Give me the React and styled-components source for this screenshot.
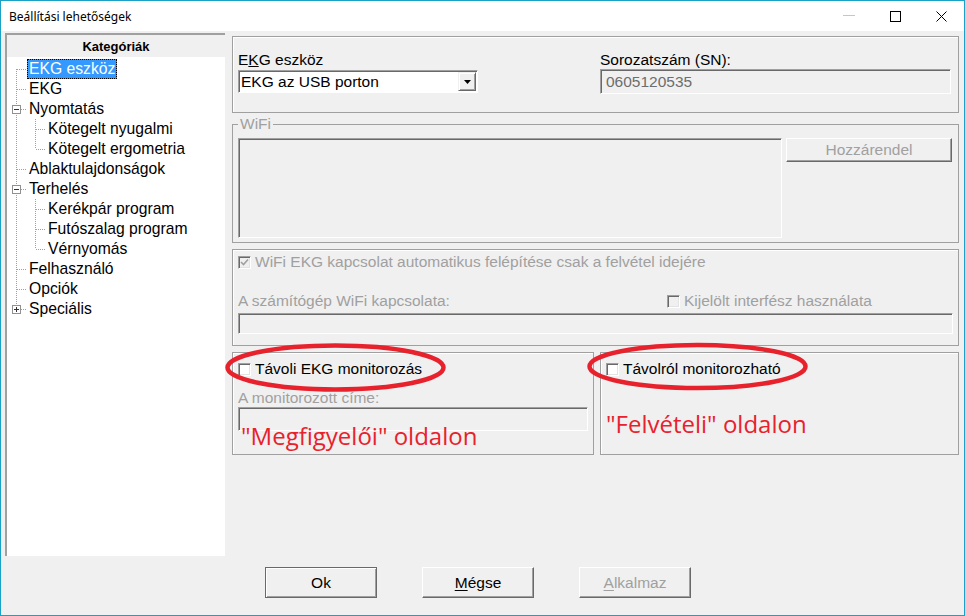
import React from 'react'
import styled, { createGlobalStyle } from 'styled-components'

const FACE = '#f0f0f0'
const EDGE = '#a0a0a0'
const SHADOW = '#696969'
const GRAYTEXT = '#a0a0a0'
const RED = '#e8222d'
const HIGHLIGHT = '#3399ff'

const GlobalStyle = createGlobalStyle`
  body {
    margin: 0;
    background: #fff;
  }
  * {
    box-sizing: border-box;
  }
`

const Window = styled.div`
  width: 965px;
  height: 616px;
  border: 1px solid #1ba1c5;
  display: flex;
  flex-direction: column;
  background: ${FACE};
  font-family: "Liberation Sans", Arial, sans-serif;
  font-size: 15.5px;
  color: #000;
  overflow: hidden;
`

const TitleBar = styled.div`
  flex: none;
  height: 30px;
  display: flex;
  align-items: center;
  background: #fff;
  padding-left: 8px;
  font-family: "Noto Sans", sans-serif;
  font-size: 12px;
`

const Title = styled.span`
  flex: 1;
`

const Caption = styled.span`
  width: 46px;
  height: 30px;
  display: flex;
  align-items: center;
  justify-content: center;
`

const Body = styled.div`
  flex: 1;
  display: flex;
  flex-direction: column;
  padding: 2px 5px 0 4px;
`

const Main = styled.div`
  display: flex;
  gap: 7px;
  height: 523px;
`

/* ---------- tree ---------- */

const TreePanel = styled.div`
  width: 220px;
  flex: none;
  background: #fff;
  border-top: 2px solid ${EDGE};
  border-left: 2px solid ${EDGE};
  display: flex;
  flex-direction: column;
`

const TreeHeader = styled.div`
  height: 22px;
  background: ${FACE};
  display: flex;
  align-items: center;
  justify-content: center;
  font-weight: bold;
  font-size: 13px;
`

const TreeList = styled.div`
  padding-top: 2px;
  font-size: 15.7px;
`

const TreeRow = styled.div`
  display: flex;
  height: 20px;
`

const dots = (dir) => `repeating-linear-gradient(${dir}, #a0a0a0 0 1px, transparent 1px 2px)`

const treeLines = ({ $w, $x, $up, $down, $branch }) => {
  const layers = []
  if ($up) layers.push([dots('to bottom'), `${$x}px 0`, '1px 10px'])
  if ($down) layers.push([dots('to bottom'), `${$x}px 10px`, '1px 10px'])
  if ($branch) layers.push([dots('to right'), `${$x + 1}px 10px`, `${$w - $x - 1}px 1px`])
  if (!layers.length) return ''
  return `
    background-image: ${layers.map((l) => l[0]).join(', ')};
    background-position: ${layers.map((l) => l[1]).join(', ')};
    background-size: ${layers.map((l) => l[2]).join(', ')};
    background-repeat: no-repeat;
  `
}

const Gutter = styled.span`
  flex: none;
  width: ${(p) => p.$w}px;
  height: 20px;
  display: flex;
  align-items: center;
  ${treeLines}
`

const Expander = styled.svg`
  margin-left: ${(p) => p.$x - 4}px;
  display: block;
`

const TreeLabel = styled.span`
  height: 20px;
  line-height: 20px;
  padding: 0 2px;
  white-space: nowrap;
  background: ${(p) => (p.$selected ? HIGHLIGHT : 'transparent')};
  color: ${(p) => (p.$selected ? '#fff' : '#000')};
  outline: ${(p) => (p.$selected ? '1px dotted #000' : 'none')};
  outline-offset: -1px;
`

const TREE = [
  { label: 'EKG eszköz', selected: true },
  { label: 'EKG' },
  { label: 'Nyomtatás', children: ['Kötegelt nyugalmi', 'Kötegelt ergometria'] },
  { label: 'Ablaktulajdonságok' },
  { label: 'Terhelés', children: ['Kerékpár program', 'Futószalag program', 'Vérnyomás'] },
  { label: 'Felhasználó' },
  { label: 'Opciók' },
  { label: 'Speciális', collapsed: true },
]

const ExpandBox = ({ plus }) => (
  <Expander $x={9} width="9" height="9" viewBox="0 0 9 9">
    <rect x="0.5" y="0.5" width="8" height="8" fill="#fff" stroke="#919191" />
    <line x1="2" y1="4.5" x2="7" y2="4.5" stroke="#333" />
    {plus && <line x1="4.5" y1="2" x2="4.5" y2="7" stroke="#333" />}
  </Expander>
)

const Tree = () => {
  const rows = []
  TREE.forEach((node, i) => {
    const first = i === 0
    const last = i === TREE.length - 1
    const hasBox = node.children || node.collapsed
    rows.push(
      <TreeRow key={node.label}>
        <Gutter $w={20} $x={9} $up={!first} $down={!last} $branch>
          {hasBox && <ExpandBox plus={node.collapsed} />}
        </Gutter>
        <TreeLabel $selected={node.selected}>{node.label}</TreeLabel>
      </TreeRow>
    )
    ;(node.children || []).forEach((child, j) => {
      rows.push(
        <TreeRow key={child}>
          <Gutter $w={20} $x={9} $up $down={!last} />
          <Gutter $w={19} $x={8} $up $down={j < node.children.length - 1} $branch />
          <TreeLabel>{child}</TreeLabel>
        </TreeRow>
      )
    })
  })
  return (
    <TreePanel>
      <TreeHeader>Kategóriák</TreeHeader>
      <TreeList>{rows}</TreeList>
    </TreePanel>
  )
}

/* ---------- controls ---------- */

const Column = styled.div`
  flex: 1;
  display: flex;
  flex-direction: column;
`

const Group = styled.div`
  position: relative;
  border: 1px solid ${EDGE};
  box-shadow: inset 1px 1px 0 #fff;
  margin-top: ${(p) => p.$mt || 0}px;
  height: ${(p) => p.$h}px;
  padding: 0 5px;
`

const Fieldset = styled.fieldset`
  margin: 2px 0 0;
  border: 1px solid ${EDGE};
  padding: 5px 5px 4px 5px;
  min-width: 0;
  display: flex;
  gap: 4px;
`

const Legend = styled.legend`
  padding: 0 2px;
  line-height: 18px;
  color: ${GRAYTEXT};
`

const DeviceGrid = styled.div`
  display: grid;
  grid-template-columns: 362px 1fr;
  padding: 14px 2px 0 0;
`

const Field = styled.div`
  display: flex;
  flex-direction: column;
`

const Label = styled.div`
  height: 18px;
  line-height: 18px;
  color: ${(p) => (p.$disabled ? GRAYTEXT : '#000')};
  white-space: nowrap;
`

const Combo = styled.div`
  width: 240px;
  height: 23px;
  margin-top: 1px;
  display: flex;
  align-items: center;
  background: #fff;
  border: 1px solid;
  border-color: ${EDGE} #fff #fff ${EDGE};
  box-shadow: inset 1px 1px 0 ${SHADOW};
  padding: 1px 1px 1px 2px;
`

const ComboText = styled.span`
  flex: 1;
  line-height: 19px;
`

const ComboArrow = styled.span`
  width: 18px;
  height: 19px;
  display: flex;
  align-items: center;
  justify-content: center;
  background: ${FACE};
  border: 1px solid;
  border-color: ${FACE} ${SHADOW} ${SHADOW} ${FACE};
  box-shadow: inset 1px 1px 0 #fff, inset -1px -1px 0 ${EDGE};
`

const Sunken = styled.div`
  flex: none;
  height: ${(p) => p.$h}px;
  width: ${(p) => (p.$w ? `${p.$w}px` : 'auto')};
  background: ${FACE};
  border: 1px solid;
  border-color: ${EDGE} #fff #fff ${EDGE};
  box-shadow: inset 1px 1px 0 ${SHADOW};
  padding: 0 5px;
  display: flex;
  align-items: center;
  color: #6d6d6d;
`

const Button = styled.button`
  width: ${(p) => p.$w}px;
  height: ${(p) => p.$h}px;
  flex: none;
  background: ${FACE};
  font: inherit;
  color: ${(p) => (p.disabled ? GRAYTEXT : '#000')};
  border: 1px solid;
  border-color: ${(p) => (p.$default ? `${SHADOW}` : `#fff ${SHADOW} ${SHADOW} #fff`)};
  box-shadow: ${(p) =>
    p.$default ? `inset 1px 1px 0 #fff, inset -1px -1px 0 ${EDGE}` : `inset -1px -1px 0 ${EDGE}`};
  padding: 0;
  u {
    text-decoration-thickness: 1px;
    text-underline-offset: 2px;
  }
`

const CheckRow = styled.label`
  display: flex;
  align-items: center;
  gap: 4px;
  height: 18px;
  white-space: nowrap;
  color: ${(p) => (p.$disabled ? GRAYTEXT : '#000')};
`

const Box = styled.span`
  width: 13px;
  height: 13px;
  flex: none;
  display: flex;
  align-items: center;
  justify-content: center;
  background: ${(p) => (p.$disabled ? FACE : '#fff')};
  border: 1px solid;
  border-color: ${EDGE} #fff #fff ${EDGE};
  box-shadow: inset 1px 1px 0 ${SHADOW}, inset -1px -1px 0 #e3e3e3;
`

const Check = ({ checked, disabled, children }) => (
  <CheckRow $disabled={disabled}>
    <Box $disabled={disabled}>
      {checked && (
        <svg width="9" height="9" viewBox="0 0 9 9">
          <path d="M1 4 L3.5 6.5 L8 1.5" fill="none" stroke={disabled ? GRAYTEXT : '#000'} strokeWidth="1.6" />
        </svg>
      )}
    </Box>
    {children}
  </CheckRow>
)

const SplitRow = styled.div`
  display: grid;
  grid-template-columns: 429px 1fr;
  margin-top: ${(p) => p.$mt || 0}px;
`

const Stack = styled.div`
  display: flex;
  flex-direction: column;
  padding-top: ${(p) => p.$pt || 0}px;
`

const Gap = styled.div`
  flex: none;
  height: ${(p) => p.$h}px;
`

const MonitorRow = styled.div`
  position: relative;
  display: grid;
  grid-template-columns: 362px 1fr;
  gap: 6px;
  margin-top: 6px;
`

const Marks = styled.svg`
  position: absolute;
  left: 0;
  top: 0;
  width: 100%;
  height: 100%;
  overflow: visible;
  pointer-events: none;
`

const Note = styled.div`
  position: absolute;
  left: ${(p) => p.$left}px;
  top: ${(p) => p.$top}px;
  font-family: "Open Sans", "Noto Sans", sans-serif;
  font-size: 24px;
  line-height: 24px;
  color: ${RED};
  white-space: nowrap;
`

const ButtonRow = styled.div`
  display: flex;
  gap: 45px;
  margin-top: 11px;
  padding-left: 260px;
`

export default function App() {
  return (
    <Window>
      <GlobalStyle />
      <TitleBar>
        <Title>Beállítási lehetőségek</Title>
        <Caption>
          <svg width="12" height="2" viewBox="0 0 12 2">
            <rect width="12" height="1" fill="#c6c6c6" />
          </svg>
        </Caption>
        <Caption>
          <svg width="11" height="11" viewBox="0 0 11 11">
            <rect x="0.5" y="0.5" width="10" height="10" fill="none" stroke="#000" />
          </svg>
        </Caption>
        <Caption>
          <svg width="11" height="11" viewBox="0 0 11 11">
            <path d="M0.5 0.5 L10.5 10.5 M10.5 0.5 L0.5 10.5" stroke="#000" strokeWidth="1" />
          </svg>
        </Caption>
      </TitleBar>
      <Body>
        <Main>
          <Tree />
          <Column>
            <Group $mt={3} $h={77}>
              <DeviceGrid>
                <Field>
                  <Label>
                    E<u>K</u>G eszköz
                  </Label>
                  <Combo>
                    <ComboText>EKG az USB porton</ComboText>
                    <ComboArrow>
                      <svg width="7" height="4" viewBox="0 0 7 4">
                        <path d="M0 0 H7 L3.5 4 Z" fill="#000" />
                      </svg>
                    </ComboArrow>
                  </Combo>
                </Field>
                <Field>
                  <Label>Sorozatszám (SN):</Label>
                  <Sunken $h={25}>0605120535</Sunken>
                </Field>
              </DeviceGrid>
            </Group>

            <Fieldset>
              <Legend>WiFi</Legend>
              <Sunken $h={100} $w={544} />
              <Button $w={166} $h={24} disabled>
                Hozzárendel
              </Button>
            </Fieldset>

            <Group $mt={6} $h={97}>
              <Stack $pt={3}>
                <Check checked disabled>
                  WiFi EKG kapcsolat automatikus felépítése csak a felvétel idejére
                </Check>
                <SplitRow $mt={21}>
                  <Label $disabled>A számítógép WiFi kapcsolata:</Label>
                  <Check disabled>Kijelölt interfész használata</Check>
                </SplitRow>
                <Gap $h={3} />
                <Sunken $h={21} />
              </Stack>
            </Group>

            <MonitorRow>
              <Group $h={103}>
                <Stack $pt={7}>
                  <Check>Távoli EKG monitorozás</Check>
                  <Gap $h={11} />
                  <Label $disabled>A monitorozott címe:</Label>
                  <Sunken $h={24} />
                </Stack>
                <Note $left={8} $top={71}>"Megfigyelői" oldalon</Note>
              </Group>
              <Group $h={103}>
                <Stack $pt={7}>
                  <Check>Távolról monitorozható</Check>
                </Stack>
                <Note $left={5} $top={59}>"Felvételi" oldalon</Note>
              </Group>
              <Marks>
                <ellipse cx="103.5" cy="15.5" rx="108" ry="22" fill="none" stroke={RED} strokeWidth="4.5" />
                <ellipse cx="465.5" cy="14.5" rx="108" ry="21.5" fill="none" stroke={RED} strokeWidth="4.5" />
              </Marks>
            </MonitorRow>
          </Column>
        </Main>
        <ButtonRow>
          <Button $w={112} $h={31} $default>
            Ok
          </Button>
          <Button $w={112} $h={31}>
            <u>M</u>égse
          </Button>
          <Button $w={112} $h={31} disabled>
            <u>A</u>lkalmaz
          </Button>
        </ButtonRow>
      </Body>
    </Window>
  )
}
